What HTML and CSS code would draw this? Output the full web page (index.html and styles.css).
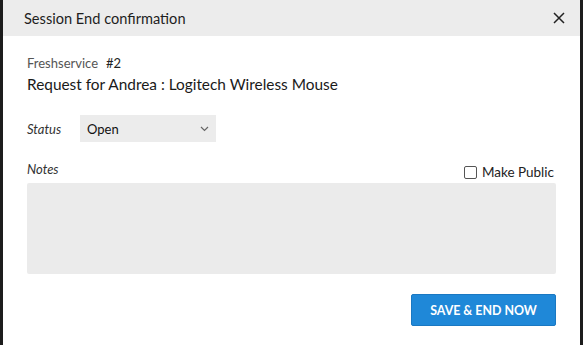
FILE: index.html
```html
<!DOCTYPE html>
<html>
<head>
<meta charset="utf-8">
<link rel="stylesheet" href="styles.css">
</head>
<body>
<div class="dialog">
  <div class="header">
    <span class="title">Session End confirmation</span>
    <svg class="close" width="12" height="12" viewBox="0 0 12 12"><path d="M1 1L11 11M11 1L1 11" stroke="#222" stroke-width="1.5" fill="none"/></svg>
  </div>
  <div class="content">
    <div class="source"><span class="app">Freshservice</span><span class="num">#2</span></div>
    <div class="subject">Request for Andrea : Logitech Wireless Mouse</div>
    <div class="status-row">
      <span class="label">Status</span>
      <div class="select"><span>Open</span>
        <svg width="9" height="6" viewBox="0 0 9 6"><path d="M1 1L4.5 4.5L8 1" stroke="#666" stroke-width="1.2" fill="none"/></svg>
      </div>
    </div>
    <div class="notes-head">
      <span class="label">Notes</span>
      <label class="public"><span class="box"></span>Make Public</label>
    </div>
    <div class="notes"></div>
    <div class="actions">
      <button class="primary">SAVE &amp; END NOW</button>
    </div>
  </div>
</div>
</body>
</html>
```
FILE: styles.css
```css
html, body {
  margin: 0;
  padding: 0;
}
body {
  background: #1c1c1c;
  height: 345px;
  font-family: Lato, "Open Sans", sans-serif;
  color: #222;
}
.dialog {
  margin: 0 3px;
  width: 577px;
  height: 345px;
  background: #fff;
}
.header {
  height: 36px;
  background: #ececec;
  display: flex;
  align-items: center;
  justify-content: space-between;
  padding: 0 15px 0 21px;
}
.title {
  font-size: 14.6px;
  color: #1e1e1e;
}
.close {
  display: block;
}
.content {
  padding: 19px 24px 0 24px;
}
.source {
  font-size: 13px;
  line-height: 16px;
  display: flex;
  gap: 8px;
}
.app {
  color: #555;
}
.num {
  color: #222;
}
.subject {
  font-size: 15.4px;
  line-height: 18px;
  margin-top: 4px;
  color: #1a1a1a;
}
.status-row {
  display: flex;
  align-items: center;
  margin-top: 22px;
}
.label {
  font-style: italic;
  font-size: 13px;
  color: #333;
}
.status-row .label {
  width: 53px;
}
.select {
  width: 136px;
  height: 27px;
  background: #ececec;
  display: flex;
  align-items: center;
  justify-content: space-between;
  padding: 0 7px 0 7px;
  box-sizing: border-box;
  font-size: 13px;
  color: #111;
}
.notes-head {
  display: flex;
  justify-content: space-between;
  align-items: flex-start;
  margin-top: 19px;
  height: 22px;
}
.notes-head .label {
  line-height: 16px;
}
.public {
  display: flex;
  align-items: center;
  font-size: 13.5px;
  color: #222;
  margin-top: 3px;
  line-height: 16px;
  margin-right: 2px;
}
.box {
  width: 11px;
  height: 11px;
  border: 1px solid #555;
  border-radius: 2px;
  margin-right: 5px;
  background: #fff;
}
.notes {
  height: 91px;
  background: #ebebeb;
  border-radius: 2px;
}
.actions {
  display: flex;
  justify-content: flex-end;
  margin-top: 20px;
}
.primary {
  width: 145px;
  height: 32px;
  background: #1f88d8;
  border: 1px solid #1a78c2;
  border-radius: 2px;
  color: #fff;
  font-family: Lato, "Open Sans", sans-serif;
  font-weight: bold;
  font-size: 12.4px;
  padding: 0;
}
```
